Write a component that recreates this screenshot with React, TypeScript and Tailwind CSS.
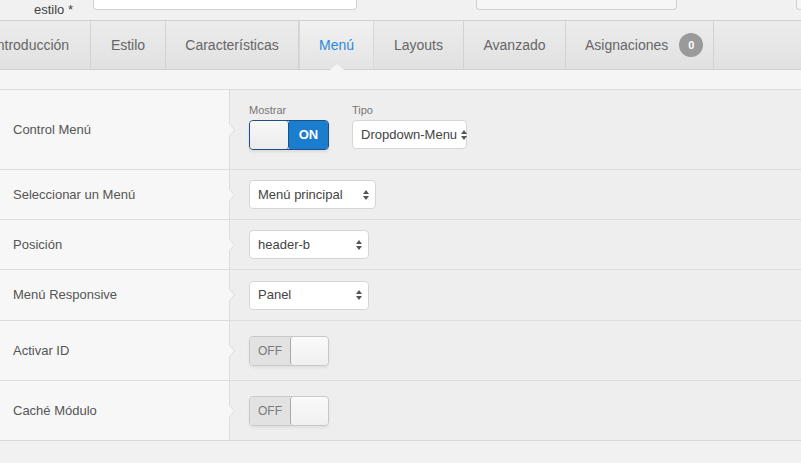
import React from "react";

// Filas del formulario del menú
type Row = {
    label: string;
    h: string;
    control: React.ReactNode;
};

function SelectBox({ value, w }: { value: string; w: string }) {
    return (
        <div className={`${w} h-[29px] flex items-center justify-between bg-white border border-[#d6d6d6] rounded-[4px] pl-[8px] pr-[6px] text-[13px] text-[#444] whitespace-nowrap`}>
            <span>{value}</span>
            <svg width="6" height="10" viewBox="0 0 6 10" className="ml-1 shrink-0">
                <path d="M3 0 L6 4 L0 4 Z" fill="#555" />
                <path d="M3 10 L6 6 L0 6 Z" fill="#555" />
            </svg>
        </div>
    );
}

function SwitchOn() {
    return (
        <div className="w-[80px] h-[30px] flex rounded-[4px] border border-[#1d4f86] overflow-hidden shadow-[0_2px_3px_rgba(0,0,0,0.08)]">
            <div className="w-[39px] bg-gradient-to-b from-[#f7f7f7] to-[#ececec] border-r border-[#1d4f86] rounded-[3px]" />
            <div className="flex-1 bg-[#1b7dce] flex items-center justify-center text-white text-[13px] font-bold">ON</div>
        </div>
    );
}

function SwitchOff() {
    return (
        <div className="w-[80px] h-[30px] flex rounded-[4px] border border-[#c8c8c8] overflow-hidden shadow-[0_2px_3px_rgba(0,0,0,0.06)]">
            <div className="w-[40px] bg-[#e2e2e2] flex items-center justify-center text-[#7a7a7a] text-[12px]">OFF</div>
            <div className="flex-1 bg-gradient-to-b from-[#fafafa] to-[#f0f0f0] border-l border-[#a9a9a9] rounded-[3px]" />
        </div>
    );
}

const tabs = [
    { name: "Introducción", w: "w-[119px]", ml: "-ml-[28px]" },
    { name: "Estilo", w: "w-[75px]" },
    { name: "Características", w: "w-[133px]" },
    { name: "Menú", w: "w-[75px]", active: true },
    { name: "Layouts", w: "w-[90px]" },
    { name: "Avanzado", w: "w-[102px]" },
    { name: "Asignaciones", w: "w-[148px]", badge: "0" },
];

export default function App() {
    const rows: Row[] = [
        {
            label: "Control Menú",
            h: "h-[79px]",
            control: (
                <div className="flex gap-[23px] -mt-[5px]">
                    <div>
                        <div className="text-[11px] text-[#777] mb-[3px] leading-[13px]">Mostrar</div>
                        <SwitchOn />
                    </div>
                    <div>
                        <div className="text-[11px] text-[#777] mb-[3px] leading-[13px]">Tipo</div>
                        <SelectBox value="Dropdown-Menu" w="w-[115px]" />
                    </div>
                </div>
            ),
        },
        { label: "Seleccionar un Menú", h: "h-[50px]", control: <SelectBox value="Menú principal" w="w-[127px]" /> },
        { label: "Posición", h: "h-[50px]", control: <SelectBox value="header-b" w="w-[120px]" /> },
        { label: "Menú Responsive", h: "h-[51px]", control: <SelectBox value="Panel" w="w-[120px]" /> },
        { label: "Activar ID", h: "h-[60px]", control: <SwitchOff /> },
        { label: "Caché Módulo", h: "h-[60px]", control: <SwitchOff /> },
    ];

    return (
        <div className="w-[801px] h-[463px] overflow-hidden bg-[#f1f1f1] font-['Liberation_Sans',Arial,sans-serif]">
            {/* Campos de arriba (cortados) */}
            <div className="h-[20px] flex items-start">
                <div className="w-[73px] shrink-0 text-right text-[13px] text-[#444] leading-[13px] pt-[3px]">estilo *</div>
                <div className="ml-[20px] shrink-0 w-[264px] h-[10px] bg-white border border-t-0 border-[#d0d0d0] rounded-b-[4px]" />
                <div className="ml-[119px] shrink-0 w-[201px] h-[10px] bg-[#f6f6f6] border border-t-0 border-[#d0d0d0] rounded-b-[4px]" />
                <div className="ml-[119px] shrink-0 w-[20px] h-[10px] bg-[#f6f6f6] border border-t-0 border-[#d0d0d0] rounded-b-[4px]" />
            </div>

            {/* Pestañas */}
            <div className="h-[50px] flex border-t border-b border-[#cfcfcf] bg-gradient-to-b from-[#ececec] to-[#e1e1e1]">
                {tabs.map((t) => (
                    <div
                        key={t.name}
                        className={`${t.w} ${t.ml ?? ""} shrink-0 relative flex items-center border-r border-[#d2d2d2] text-[14px] ${
                            t.badge ? "justify-start pl-[19px] gap-[11px]" : "justify-center"
                        } ${t.active ? "text-[#2a8ad8] bg-gradient-to-b from-[#f1f1f1] to-[#e4e4e4] border-l border-[#d8d8d8]" : "text-[#666]"}`}
                    >
                        <span>{t.name}</span>
                        {t.badge && (
                            <span className="w-[24px] h-[24px] rounded-full bg-[#9a9a9a] text-white text-[11px] font-bold flex items-center justify-center">
                                {t.badge}
                            </span>
                        )}
                        {t.active && (
                            <span className="absolute -bottom-[1px] left-1/2 -translate-x-1/2 w-0 h-0 border-l-[7px] border-r-[7px] border-b-[6px] border-l-transparent border-r-transparent border-b-[#f5f5f5]" />
                        )}
                    </div>
                ))}
            </div>

            {/* Banda */}
            <div className="h-[20px] bg-[#f5f5f5] border-b border-[#dcdcdc]" />

            {/* Filas */}
            <div className="border-b border-[#d9d9d9]">
                {rows.map((r, i) => (
                    <div key={r.label} className={`${r.h} flex ${i > 0 ? "border-t border-[#dcdcdc]" : ""}`}>
                        <div className="w-[229px] shrink-0 bg-[#f7f7f7] flex items-center pl-[13px] text-[13px] text-[#555]">{r.label}</div>
                        <div className="relative flex-1 bg-[#eeeeee] border-l border-[#dcdcdc] flex items-center pl-[19px]">
                            <span className="absolute -left-[1px] top-1/2 -translate-y-1/2 w-0 h-0 border-t-[7px] border-b-[7px] border-l-[6px] border-t-transparent border-b-transparent border-l-[#dcdcdc]" />
                            <span className="absolute left-[-1px] top-1/2 -translate-y-1/2 w-0 h-0 border-t-[6px] border-b-[6px] border-l-[5px] border-t-transparent border-b-transparent border-l-[#f7f7f7]" />
                            {r.control}
                        </div>
                    </div>
                ))}
            </div>
        </div>
    );
}
